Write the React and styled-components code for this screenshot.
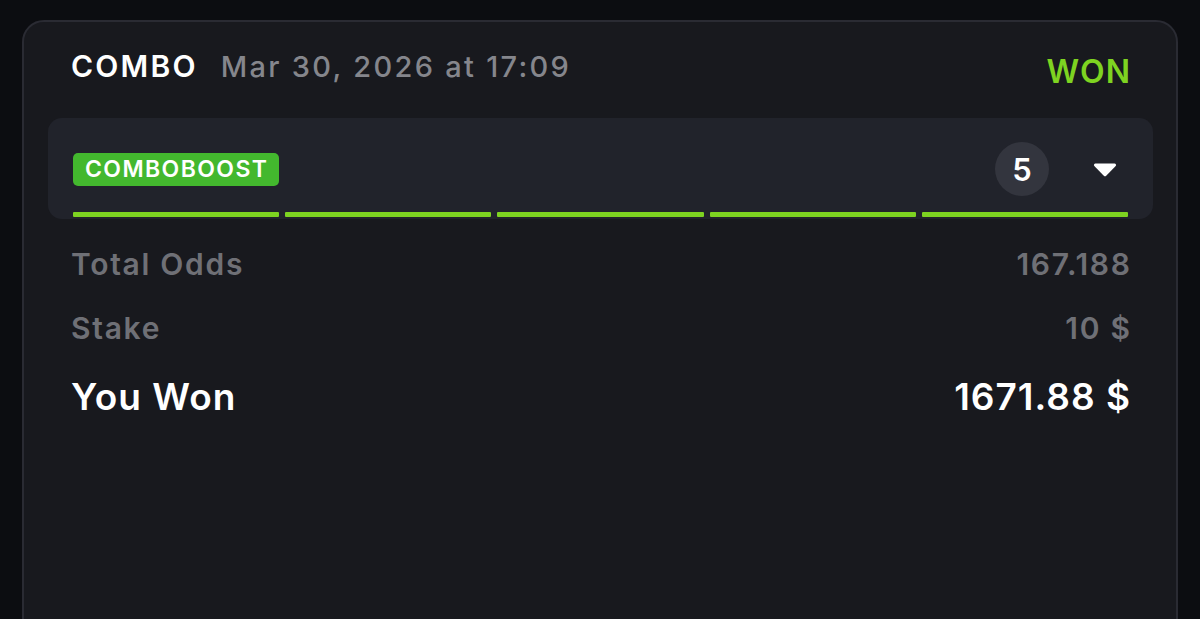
import React from "react";
import styled, { createGlobalStyle } from "styled-components";

const GlobalStyle = createGlobalStyle`
  html, body {
    margin: 0;
    padding: 0;
    background: #0c0d11;
    font-family: Inter, "Noto Sans", "Liberation Sans", sans-serif;
    -webkit-font-smoothing: antialiased;
  }
`;

const legs = [1, 2, 3, 4, 5];

const App = () => {
  return (
    <>
      <GlobalStyle />
      <Page>
        <Card>
          <Header>
            <TitleGroup>
              <BetType>COMBO</BetType>
              <BetDate>Mar 30, 2026 at 17:09</BetDate>
            </TitleGroup>
            <Status>WON</Status>
          </Header>

          <LegsBox>
            <LegsTop>
              <Badge>COMBOBOOST</Badge>
              <Count>5</Count>
              <Caret>
                <svg width="24" height="15" viewBox="0 0 24 15">
                  <path
                    d="M2.5 1.5h19c1.4 0 2.1 1.6 1.2 2.6l-9.5 9.6c-.7.7-1.7.7-2.4 0L1.3 4.1C.4 3.1 1.1 1.5 2.5 1.5z"
                    fill="#ffffff"
                  />
                </svg>
              </Caret>
            </LegsTop>
            <Bars>
              {legs.map((l) => (
                <Bar key={l} />
              ))}
            </Bars>
          </LegsBox>

          <Summary>
            <Row>
              <Label>Total Odds</Label>
              <Value>167.188</Value>
            </Row>
            <Row>
              <Label>Stake</Label>
              <Value>10 $</Value>
            </Row>
            <Row>
              <Label $strong>You Won</Label>
              <Value $strong>1671.88 $</Value>
            </Row>
          </Summary>
        </Card>
      </Page>
    </>
  );
};

export default App;

/******************/
/***** Styles *****/
/******************/

const Page = styled.div`
  height: 619px;
  overflow: hidden;
  padding: 20px 22px 0 22px;
  box-sizing: border-box;
`;

const Card = styled.section`
  height: 720px;
  box-sizing: border-box;
  background: #18191e;
  border: 2px solid #2a2b33;
  border-radius: 22px;
  padding: 26px 23px 0 24px;
  display: flex;
  flex-direction: column;
`;

const Header = styled.div`
  display: flex;
  align-items: flex-start;
  justify-content: space-between;
  padding: 0 23px;
  height: 70px;
`;

const TitleGroup = styled.div`
  display: flex;
  align-items: baseline;
  gap: 23px;
  line-height: 36px;
`;

const BetType = styled.span`
  color: #ffffff;
  font-size: 30px;
  font-weight: 600;
  letter-spacing: 2.2px;
`;

const BetDate = styled.span`
  color: #85868c;
  font-size: 29px;
  font-weight: 500;
  letter-spacing: 2.3px;
`;

const Status = styled.span`
  color: #7ed321;
  font-size: 32px;
  font-weight: 600;
  line-height: 38px;
  margin-top: 5px;
  letter-spacing: 1.2px;
  margin-right: -1.2px;
`;

const LegsBox = styled.div`
  background: #21232b;
  border-radius: 14px;
  padding: 24px 25px 2px 25px;
`;

const LegsTop = styled.div`
  display: flex;
  align-items: center;
  height: 54px;
`;

const Badge = styled.span`
  background: #43b82e;
  color: #ffffff;
  font-size: 23px;
  font-weight: 600;
  height: 33px;
  line-height: 33px;
  padding: 0 11px 0 12px;
  border-radius: 5px;
  letter-spacing: 1.4px;
  margin-right: auto;
`;

const Count = styled.span`
  width: 54px;
  height: 54px;
  border-radius: 50%;
  background: #33353e;
  color: #ffffff;
  font-size: 31px;
  font-weight: 600;
  display: flex;
  align-items: center;
  justify-content: center;
`;

const Caret = styled.span`
  display: flex;
  align-items: center;
  margin-left: 44px;
  margin-right: 11px;
`;

const Bars = styled.div`
  display: grid;
  grid-template-columns: repeat(5, 1fr);
  gap: 6px;
  margin-top: 16px;
`;

const Bar = styled.span`
  height: 5px;
  background: #7ed321;
  border-radius: 1px;
`;

const Summary = styled.div`
  display: flex;
  flex-direction: column;
  gap: 28px;
  padding: 27px 23px 0 23px;
`;

const Row = styled.div`
  display: flex;
  align-items: center;
  justify-content: space-between;
`;

const Label = styled.span`
  color: ${({ $strong }) => ($strong ? "#ffffff" : "#6f7076")};
  font-size: ${({ $strong }) => ($strong ? "37px" : "30px")};
  line-height: ${({ $strong }) => ($strong ? "46px" : "36px")};
  font-weight: 600;
  letter-spacing: ${({ $strong }) => ($strong ? "1px" : "1.7px")};
`;

const Value = styled(Label)`
  margin-right: ${({ $strong }) => ($strong ? "-1px" : "-1.7px")};
`;
